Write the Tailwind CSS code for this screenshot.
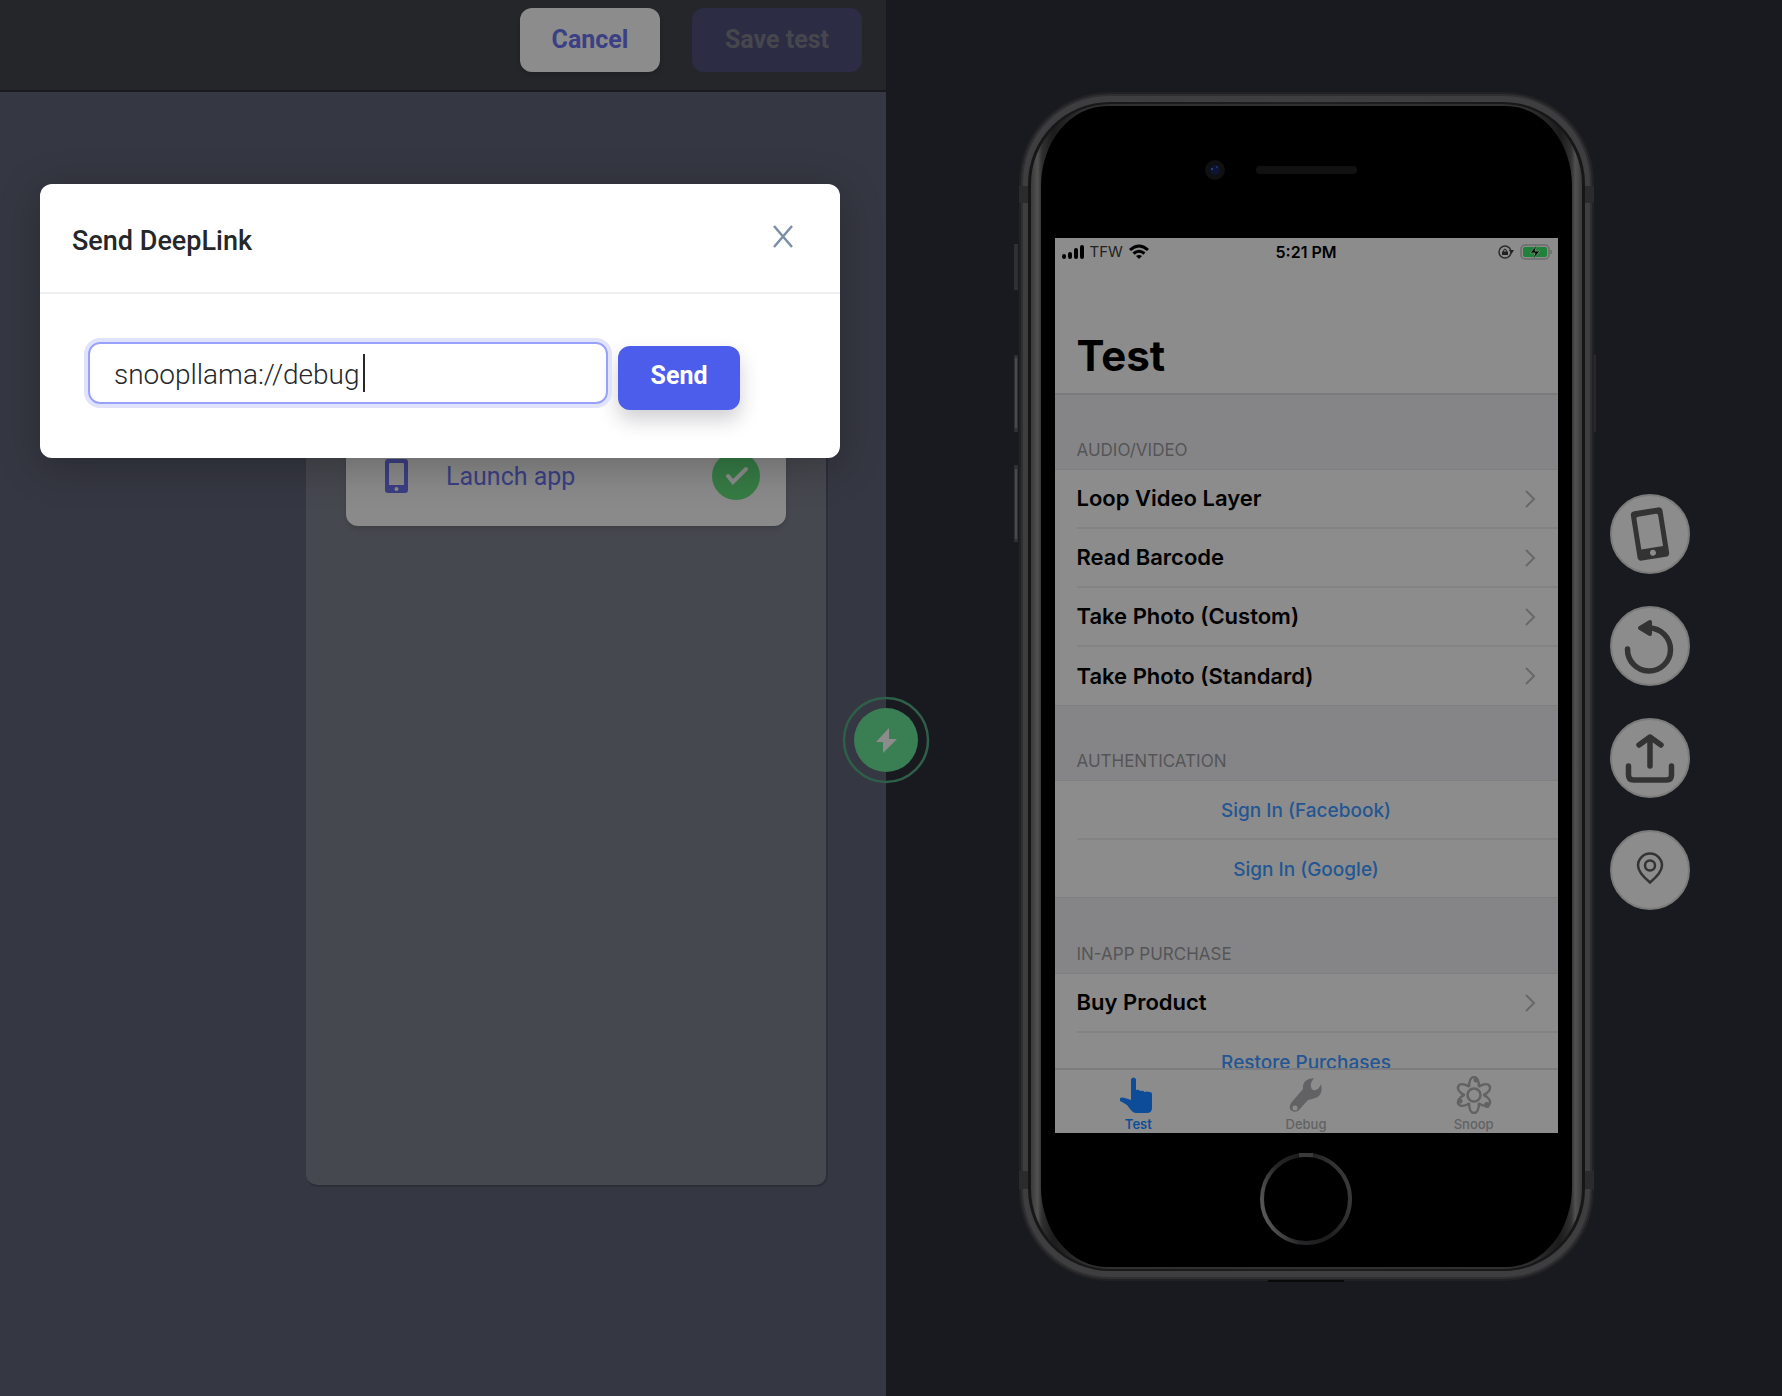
<!DOCTYPE html>
<html lang="en">
<head>
    <meta charset="UTF-8">
    <meta name="viewport" content="width=device-width, initial-scale=1.0">
    <title>Send DeepLink</title>
    <script src="https://cdn.jsdelivr.net/npm/@tailwindcss/browser@4"></script>
</head>
<body class="bg-[#191a1f] font-['Roboto',sans-serif]">
    <div class="relative grid min-h-screen grid-cols-[886fr_896fr]">

        <!-- Test editor -->
        <div class="relative flex flex-col bg-[#353742]">
            <header class="flex justify-end gap-8 border-b-2 border-[#191a1f] bg-[#25262a] pt-2 pr-6 pb-[18px]">
                <button class="h-16 w-[140px] rounded-xl bg-[#8c8c8c] text-[25px] font-bold text-[#3b3f83] shadow-md">Cancel</button>
                <button class="h-16 w-[170px] rounded-xl bg-[#2c2d45] text-[25px] font-bold text-[#46474d]" disabled>Save test</button>
            </header>

            <main class="flex flex-1 pt-[108px] pr-[58px] pb-[209px]">
                <section class="ml-auto w-[522px] rounded-xl border-r-2 border-b-2 border-[#2c2e38] bg-[#46484f] px-10 pt-[226px]">
                    <div class="flex h-[100px] items-center rounded-xl bg-[#8a8a8a] px-[26px] shadow-md">
                        <svg class="ml-3 h-[34px] w-6" viewBox="0 0 24 34"><path fill="#3b3f83" fill-rule="evenodd" d="M4 0h17a3 3 0 0 1 3 3v28a3 3 0 0 1-3 3H4a3 3 0 0 1-3-3V3a3 3 0 0 1 3-3zm1 5v21h15V5a1 1 0 0 0-1-1H6a1 1 0 0 0-1 1zm7.500 23a2 2 0 1 0 0 4 2 2 0 0 0 0-4z"/></svg>
                        <span class="pt-0.5 ml-[38px] text-[25px] text-[#3b3f83]">Launch app</span>
                        <svg class="ml-auto h-12 w-12" viewBox="0 0 48 48"><circle cx="24" cy="24" r="24" fill="#367b45"/><path d="M16 24l5 6 13-13" fill="none" stroke="#8c8c8c" stroke-width="4" stroke-linecap="round"/></svg>
                    </div>
                </section>
            </main>

            <div role="dialog" aria-labelledby="dialog-title" class="absolute top-[184px] right-[46px] left-10 rounded-xl bg-white shadow-[0_8px_40px_rgba(0,0,0,0.25)]">
                <div class="flex h-[110px] items-center justify-between border-b-2 border-[#eeeff0] px-8">
                    <h2 id="dialog-title" class="pt-1.5 text-[27px] font-medium text-[#25272b]">Send DeepLink</h2>
                    <button aria-label="Close" class="mr-3 mb-1 p-0.5"><svg class="h-6 w-[22px]" viewBox="0 0 22 24"><path d="M2 2l18 21M20 2L2 23" fill="none" stroke="#7b8fa6" stroke-width="2.500"/></svg></button>
                </div>
                <form class="flex items-start px-12 pt-12 pb-12">
                    <label for="deeplink" class="sr-only">DeepLink</label>
                    <div class="relative w-[520px]">
                        <input id="deeplink" type="text" value="snoopllama://debug" class="h-[62px] w-full rounded-xl border-2 border-[#98a2fa] pt-0.5 pl-6 text-[28px] font-light text-[#25272b] ring-4 ring-[#e0e3fb] outline-none">
                        <span class="absolute top-3 left-[275px] h-[38px] w-0.5 bg-[#25272b]"></span>
                    </div>
                    <button type="button" class="mt-1 ml-2.5 h-16 w-[122px] rounded-xl bg-[#4d5deb] pb-1 text-[25px] font-bold text-white shadow-[0_10px_20px_rgba(40,40,60,0.22)]">Send</button>
                </form>
            </div>
        </div>

        <!-- Device -->
        <div class="flex items-center justify-center gap-4 pb-[23px] pl-10 font-['Inter',sans-serif]">
            <div class="relative h-[1189px] w-[575px] shrink-0 px-9 pt-[146px]">
                <svg class="absolute top-0 -left-1.5 h-[1193px] w-[587px]" viewBox="-6 0 587 1193">
                    <defs>
                        <linearGradient id="line" x1="0" x2="1"><stop offset="0" stop-color="#161617"/><stop offset=".5" stop-color="#1f1f20"/><stop offset="1" stop-color="#161617"/></linearGradient>
                        <linearGradient id="band" x1="0" x2="1"><stop offset="0" stop-color="#3a3a3b"/><stop offset=".012" stop-color="#515152"/><stop offset=".02" stop-color="#303031"/><stop offset=".04" stop-color="#1c1c1d"/><stop offset=".1" stop-color="#303031"/><stop offset=".9" stop-color="#303031"/><stop offset=".96" stop-color="#1c1c1d"/><stop offset=".98" stop-color="#303031"/><stop offset=".988" stop-color="#515152"/><stop offset="1" stop-color="#3a3a3b"/></linearGradient>
                        <linearGradient id="ring" x1="0" y1=".65" x2="1" y2=".35"><stop offset="0" stop-color="#5a5a5a"/><stop offset=".3" stop-color="#252527"/><stop offset=".6" stop-color="#1c1c1e"/><stop offset="1" stop-color="#3a3a3b"/></linearGradient>
                    </defs>
                    <path d="M-3 152v46M-3 263v77M-3 373v77" stroke="#303032" stroke-width="4"/>
                    <path d="M-3 266v70M-3 377v70" stroke="#4a4a4c" stroke-width="2"/>
                    <path d="M576 263v77" stroke="#29292b" stroke-width="2"/>
                    <rect width="575" height="1189" rx="90" fill="#222224"/>
                    <rect x="2" y="2" width="571" height="1185" rx="88" fill="#2f2f31"/>
                    <rect x="4" y="4" width="567" height="1181" rx="86" fill="#3e3e40"/>
                    <path d="M0 94h10v17H0zM565 94h10v17h-10zM0 1079h10v18H0zM565 1079h10v18h-10z" fill="#2b2b2d"/>
                    <rect x="9" y="10" width="557" height="1169" rx="82" fill="url(#line)"/>
                    <rect x="12" y="12" width="551" height="1165" rx="80" fill="url(#band)"/>
                    <rect x="22" y="14" width="531" height="1161" rx="66" ry="80"/>
                    <circle cx="196" cy="78" r="10" fill="#101012"/><circle cx="196" cy="78" r="5" fill="#0d1532"/><circle cx="193" cy="77" r="1" fill="#334d8c"/><circle cx="198" cy="75" r="1" fill="#22386e"/>
                    <rect x="237" y="74" width="101" height="8" rx="4" fill="#111112"/>
                    <circle cx="287" cy="1107" r="44" fill="none" stroke="url(#ring)" stroke-width="4"/>
                    <path d="M280 1063h14" stroke="#3a3a3b" stroke-width="4"/>
                    <path d="M249 1189h76" stroke="#09090a" stroke-width="2"/>
                </svg>

                <div class="relative flex h-[895px] w-full flex-col overflow-hidden bg-[#8c8c8c] text-black">
                    <div class="flex h-7 shrink-0 items-center px-1.5 text-[15px] font-semibold">
                        <div class="flex flex-1 items-center gap-1.5">
                            <svg class="h-4 w-[23px]" viewBox="0 0 23 16"><path d="M3 13v-1M9 13v-3M15 13V6M21 13V3" stroke="#000" stroke-width="4" stroke-linecap="round"/></svg>
                            <span class="font-normal text-[#222]">TFW</span>
                            <svg class="h-4 w-5" viewBox="0 0 20 16"><g fill="none" stroke="#000" stroke-width="3"><path d="M1 6q9-8 18 0M4.500 9.500q5.500-4.500 11 0"/></g><path d="M7 12q3-2 6 0l-3 3z"/></svg>
                        </div>
                        <span class="text-base">5:21 PM</span>
                        <div class="flex flex-1 items-center justify-end gap-1.5">
                            <svg class="h-4 w-4" viewBox="0 0 16 16"><circle cx="7" cy="8" r="6" fill="none" stroke="#2b2b2b" stroke-width="1.500"/><path d="M11 6h5l-2.500 4zM4 7.500h6V11H4z" fill="#222"/><path d="M5.500 8q0-3 1.500-3t1.500 3" fill="none" stroke="#222"/></svg>
                            <svg class="h-4 w-8" viewBox="0 0 32 16"><rect x="1" y="1" width="28" height="14" rx="4" fill="none" stroke="#6b6b6b" stroke-width="1.500"/><rect x="3" y="3" width="24" height="10" rx="2" fill="#20813a"/><path d="M31 6v4" stroke="#6b6b6b" stroke-width="1.500"/><path d="M17 1l-7 8h5l-2 6 7-8h-5z" stroke="#5e8a69"/></svg>
                        </div>
                    </div>
                    <h1 class="flex h-[129px] shrink-0 items-end border-b-2 border-[#7b7b7d] px-[22px] pb-1.5 text-[42px] font-bold">Test</h1>

                    <div class="flex min-h-0 flex-1 flex-col overflow-hidden bg-[#858587] text-[22px]">
                        <h3 class="flex h-[74px] shrink-0 items-end px-[22px] pb-1.5 text-[17px] text-[#555557]">AUDIO/VIDEO</h3>
                        <ul class="shrink-0 border-y border-[#7f7f81] bg-[#8c8c8c] pl-[22px] font-semibold">
                            <li class="flex h-[59px] items-center justify-between border-b-2 border-[#838384] pr-[22px]">Loop Video Layer <svg class="h-5 w-3" viewBox="0 0 12 20"><path d="M2 2l8 8-8 8" fill="none" stroke="#68686a" stroke-width="2"/></svg></li>
                            <li class="flex h-[59px] items-center justify-between border-b-2 border-[#838384] pr-[22px]">Read Barcode <svg class="h-5 w-3" viewBox="0 0 12 20"><path d="M2 2l8 8-8 8" fill="none" stroke="#68686a" stroke-width="2"/></svg></li>
                            <li class="flex h-[59px] items-center justify-between border-b-2 border-[#838384] pr-[22px]">Take Photo (Custom) <svg class="h-5 w-3" viewBox="0 0 12 20"><path d="M2 2l8 8-8 8" fill="none" stroke="#68686a" stroke-width="2"/></svg></li>
                            <li class="flex h-[58px] items-center justify-between pr-[22px]">Take Photo (Standard) <svg class="h-5 w-3" viewBox="0 0 12 20"><path d="M2 2l8 8-8 8" fill="none" stroke="#68686a" stroke-width="2"/></svg></li>
                        </ul>
                        <h3 class="flex h-[74px] shrink-0 items-end px-[22px] pb-1.5 text-[17px] text-[#555557]">AUTHENTICATION</h3>
                        <ul class="shrink-0 border-y border-[#7f7f81] bg-[#8c8c8c] pl-[22px] text-[19px] font-medium">
                            <li class="flex h-[59px] items-center justify-center border-b-2 border-[#838384] pt-1 pr-[22px]"><a href="#" class="text-[#235692]">Sign In (Facebook)</a></li>
                            <li class="flex h-[57px] items-center justify-center pt-1 pr-[22px]"><a href="#" class="text-[#235692]">Sign In (Google)</a></li>
                        </ul>
                        <h3 class="flex h-[75px] shrink-0 items-end px-[22px] pb-1.5 text-[17px] text-[#555557]">IN-APP PURCHASE</h3>
                        <ul class="shrink-0 border-y border-[#7f7f81] bg-[#8c8c8c] pl-[22px]">
                            <li class="flex h-[59px] items-center justify-between border-b-2 border-[#838384] pr-[22px] font-semibold">Buy Product <svg class="h-5 w-3" viewBox="0 0 12 20"><path d="M2 2l8 8-8 8" fill="none" stroke="#68686a" stroke-width="2"/></svg></li>
                            <li class="flex h-[59px] items-center justify-center pt-0.5 pr-[22px] text-[19px] font-medium"><a href="#" class="text-[#235692]">Restore Purchases</a></li>
                        </ul>
                    </div>

                    <nav class="grid h-[65px] shrink-0 grid-cols-3 border-t-2 border-[#7d7d7f] bg-[#8c8c8c] text-[13px] leading-4 font-medium text-[#626264]">
                        <a href="#" class="flex flex-col items-center gap-0.5 pt-1.5 font-semibold text-[#0d4c98]">
                            <svg class="h-[38px] w-9" viewBox="0 0 36 38"><path fill="currentColor" d="M11 3q2.500-3 5 0v11q3-1 4 1 3-1 4.500 1 2.500-1 5 0 3 0 2.500 3v13q0 5-5 5H16q-3 0-6-4l-3-4-5-3q-3-1-2-3.500 1-1.500 5-.5l6 2z"/></svg>
                            Test
                        </a>
                        <a href="#" class="flex flex-col items-center gap-0.5 pt-1.5">
                            <svg class="h-[38px] w-9" viewBox="0 0 36 38"><path fill="currentColor" fill-rule="evenodd" d="M26 2q-4 5-3 9 1 4 5 3 3-1 5-6 3 13-9 15l-4 1-9 10q-3 3-7 1t-1-8l12-14Q14 3 26 2zM7 29.500a2.500 2.500 0 1 0 0 5 2.500 2.500 0 0 0 0-5z"/></svg>
                            Debug
                        </a>
                        <a href="#" class="flex flex-col items-center gap-0.5 pt-1.5">
                            <svg class="h-[38px] w-9" viewBox="0 0 36 38"><g fill="none" stroke="currentColor" stroke-width="2.500"><path d="M13 11C13 5 15 1 18 1s5 4 5 10M13 27c0 6 2 10 5 10s5-4 5-10"/><path d="M13 11C13 5 15 1 18 1s5 4 5 10M13 27c0 6 2 10 5 10s5-4 5-10" transform="rotate(60 18 19)"/><path d="M13 11C13 5 15 1 18 1s5 4 5 10M13 27c0 6 2 10 5 10s5-4 5-10" transform="rotate(120 18 19)"/><circle cx="18" cy="19" r="6.500"/></g><g fill="currentColor"><circle cx="20" cy="4" r="2.500"/><circle cx="4" cy="25" r="2.500"/><circle cx="31" cy="29" r="3"/></g></svg>
                            Snoop
                        </a>
                    </nav>
                </div>
            </div>

            <div class="flex flex-col gap-8 pt-[31px]">
                <button aria-label="Shake device" class="flex size-20 items-center justify-center rounded-full border-2 border-[#7b7b7b] bg-[#8c8c8c]">
                    <svg class="size-14" viewBox="0 0 56 56"><g transform="rotate(-9 28 28)"><path fill="#333" fill-rule="evenodd" d="M16 3h24a4 4 0 0 1 4 4v42a4 4 0 0 1-4 4H16a4 4 0 0 1-4-4V7a4 4 0 0 1 4-4zm3 6a2 2 0 0 0-2 2v31h22V11a2 2 0 0 0-2-2zm9 35a3 3 0 1 0 0 6 3 3 0 0 0 0-6z"/></g></svg>
                </button>
                <button aria-label="Rotate device" class="flex size-20 items-center justify-center rounded-full border-2 border-[#7b7b7b] bg-[#8c8c8c]">
                    <svg class="size-14" viewBox="0 0 56 56"><path d="M27 10a21.500 21.500 0 1 1-21.500 21" fill="none" stroke="#333" stroke-width="5.500" stroke-linecap="round"/><path d="M18 10l10-6v12z" fill="#333" stroke="#333" stroke-width="4" stroke-linejoin="round"/></svg>
                </button>
                <button aria-label="Upload" class="flex size-20 items-center justify-center rounded-full border-2 border-[#7b7b7b] bg-[#8c8c8c]">
                    <svg class="size-14" viewBox="0 0 56 56"><path d="M28 36V7M17 15l11-8 11 8M6.500 36v9q0 5 5 5h33q5 0 5-5v-9" fill="none" stroke="#333" stroke-width="5.500" stroke-linecap="round" stroke-linejoin="round"/></svg>
                </button>
                <button aria-label="Set location" class="flex size-20 items-center justify-center rounded-full border-2 border-[#7b7b7b] bg-[#8c8c8c]">
                    <svg class="size-14" viewBox="0 0 56 56"><g fill="none" stroke="#333" stroke-width="2.500"><path d="M28 40.500q-12-10-12-17a12 12 0 0 1 24 0q0 7-12 17z"/><circle cx="28" cy="23.500" r="5"/></g></svg>
                </button>
            </div>
        </div>

        <!-- Connection badge on the pane divider -->
        <svg class="absolute top-[696px] left-[49.7%] size-[88px] -translate-x-1/2" viewBox="0 0 88 88"><circle cx="44" cy="44" r="42" fill="none" stroke="#2f5f49" stroke-width="2.500"/><circle cx="44" cy="44" r="32" fill="#3a7e54"/><path fill="#8c8c8c" d="M47 32L34 46h7v11l14-14h-8z"/></svg>
    </div>
</body>
</html>
